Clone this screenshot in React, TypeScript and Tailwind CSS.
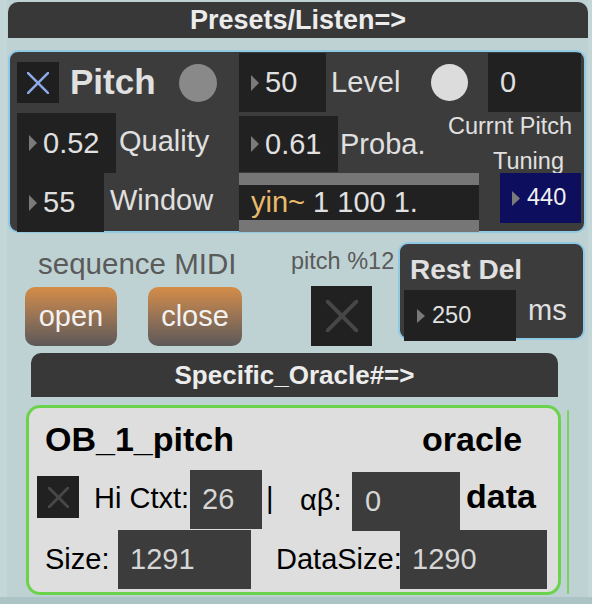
import React from "react";

const Tri = ({ h = 16 }: { h?: number }) => (
  <svg width={8} height={h} viewBox={`0 0 8 ${h}`} className="shrink-0">
    <polygon points={`0,0 8,${h / 2} 0,${h}`} fill="#7a7a7a" />
  </svg>
);

const XMark = ({
  size,
  color,
  stroke,
}: {
  size: number;
  color: string;
  stroke: number;
}) => (
  <svg width={size} height={size} viewBox={`0 0 ${size} ${size}`}>
    <line x1={0} y1={0} x2={size} y2={size} stroke={color} strokeWidth={stroke} />
    <line x1={size} y1={0} x2={0} y2={size} stroke={color} strokeWidth={stroke} />
  </svg>
);

export default function App() {
  return (
    <div className="relative h-[604px] w-[592px] overflow-hidden bg-[#bed2d4] font-['Liberation_Sans',Arial,sans-serif]">
      {/* canvas edges */}
      <div className="absolute left-0 top-0 h-[597px] w-[7px] bg-[#c3d6d8]" />
      <div className="absolute right-0 top-0 h-[597px] w-[4px] bg-[#c3d6d8]" />
      <div className="absolute bottom-0 left-0 h-[7px] w-full bg-[#adc4c7]" />
      <div className="absolute left-[567px] top-[410px] h-[184px] w-[2px] rounded-full bg-[#7fcf62]" />

      <div className="relative flex flex-col">
        {/* Presets header */}
        <div className="ml-[8px] mt-[2px] flex h-[36px] w-[580px] items-center justify-center rounded-t-[10px] bg-[#383838] text-[27px] font-bold leading-none text-[#ececec]">
          Presets/Listen=&gt;
        </div>

        {/* Pitch panel */}
        <div className="ml-[8px] mt-[12px] flex h-[183px] w-[578px] flex-col rounded-[10px] border-2 border-[#8fc9e6] bg-[#3c3c3c] pl-[7px] pt-[1px] text-[29px] leading-none text-[#e0e0e0]">
          {/* row 1 */}
          <div className="flex h-[60px] shrink-0 items-start">
            <div className="mt-[9px] flex h-[41px] w-[42px] items-center justify-center bg-[#1f1f1f]">
              <XMark size={22} color="#8eaaea" stroke={2.5} />
            </div>
            <span className="ml-[11px] mt-[11px] w-[109px] whitespace-nowrap text-[35px] font-bold">Pitch</span>
            <div className="mt-[11px] h-[38px] w-[38px] rounded-full bg-[#898989]" />
            <div className="ml-[22px] flex h-[59px] w-[87px] items-center gap-[6px] bg-[#212121] pl-[12px]">
              <Tri />
              <span>50</span>
            </div>
            <span className="ml-[5px] mt-[15px] w-[100px] whitespace-nowrap">Level</span>
            <div className="mt-[11px] h-[37px] w-[37px] rounded-full bg-[#dcdcdc]" />
            <div className="ml-[20px] flex h-[59px] w-[93px] items-center bg-[#212121] pl-[12px]">
              <span>0</span>
            </div>
          </div>

          {/* row 2 */}
          <div className="flex h-[60px] shrink-0 items-start">
            <div className="flex h-[60px] w-[99px] items-center gap-[6px] bg-[#212121] pl-[12px]">
              <Tri />
              <span>0.52</span>
            </div>
            <span className="ml-[3px] mt-[14px] w-[120px] whitespace-nowrap">Quality</span>
            <div className="mt-[3px] flex h-[56px] w-[99px] items-center gap-[6px] bg-[#212121] pl-[12px]">
              <Tri />
              <span>0.61</span>
            </div>
            <span className="ml-[2px] mt-[17px] w-[108px] whitespace-nowrap">Proba.</span>
            <div className="mt-[2px] flex flex-col text-[23.5px]">
              <span className="whitespace-nowrap">Currnt Pitch</span>
              <span className="ml-[45px] mt-[11.5px] whitespace-nowrap">Tuning</span>
            </div>
          </div>

          {/* row 3 */}
          <div className="flex h-[59px] shrink-0 items-start">
            <div className="flex h-[59px] w-[87px] items-center gap-[6px] bg-[#212121] pl-[12px]">
              <Tri />
              <span>55</span>
            </div>
            <span className="ml-[6px] mt-[13px] w-[129px] whitespace-nowrap">Window</span>
            <div className="flex h-[59px] w-[240px] flex-col justify-center bg-[#767676]">
              <div className="flex h-[35px] items-center whitespace-nowrap bg-[#212121] pl-[12px]">
                <span className="text-[#e9bb6a]">yin~</span>
                <span>&nbsp;1 100 1.</span>
              </div>
            </div>
            <div className="ml-[21px] flex h-[50px] w-[81px] items-center gap-[7px] bg-[#0e0e5e] pl-[12px] text-[23.5px] text-[#f0f0f0]">
              <Tri h={15} />
              <span>440</span>
            </div>
          </div>
        </div>

        {/* middle area */}
        <div className="flex h-[120px] items-start text-[29px] leading-none">
          <div className="ml-[25px] flex w-[217px] flex-col">
            <span className="ml-[13px] mt-[16px] whitespace-nowrap text-[29.5px] text-[#5a5a5a]">sequence MIDI</span>
            <div className="mt-[8.5px] flex gap-[31px]">
              <div className="flex h-[59px] w-[92px] items-center justify-center rounded-[10px] bg-linear-to-b from-[#d58d46] to-[#5c5858] text-[#f2f2f2]">
                open
              </div>
              <div className="flex h-[59px] w-[94px] items-center justify-center rounded-[10px] bg-linear-to-b from-[#d58d46] to-[#5c5858] text-[#f2f2f2]">
                close
              </div>
            </div>
          </div>

          <div className="ml-[49px] flex w-[104px] flex-col">
            <span className="mt-[17px] whitespace-nowrap text-[23.5px] text-[#5a5a5a]">pitch %12</span>
            <div className="ml-[20px] mt-[12.5px] flex h-[60px] w-[61px] items-center justify-center bg-[#212121]">
              <XMark size={32} color="#474747" stroke={4} />
            </div>
          </div>

          <div className="ml-[3px] mt-[9px] flex h-[98px] w-[187px] flex-col rounded-[10px] border-2 border-[#8fc9e6] bg-[#3c3c3c] text-[#e0e0e0]">
            <span className="ml-[10px] mt-[12px] whitespace-nowrap text-[28px] font-bold">Rest Del</span>
            <div className="ml-[4px] mt-[6px] flex items-start">
              <div className="flex h-[51px] w-[112px] items-center gap-[7px] bg-[#212121] pl-[13px] text-[23.5px]">
                <Tri h={14} />
                <span>250</span>
              </div>
              <span className="ml-[12px] mt-[5.5px] whitespace-nowrap">ms</span>
            </div>
          </div>
        </div>

        {/* Oracle header */}
        <div className="ml-[31px] flex h-[44px] w-[527px] items-center justify-center rounded-t-[10px] bg-[#383838] text-[26px] font-bold leading-none text-[#ececec]">
          Specific_Oracle#=&gt;
        </div>

        {/* Oracle panel */}
        <div className="ml-[26px] mt-[8px] flex h-[190px] w-[535px] flex-col rounded-[14px] border-[3px] border-[#6bd34b] bg-[#dedede] text-[29px] leading-none text-black">
          <div className="ml-[16px] mt-[14px] flex text-[34px] font-bold">
            <span className="w-[377px] whitespace-nowrap">OB_1_pitch</span>
            <span className="whitespace-nowrap">oracle</span>
          </div>

          <div className="mt-[14px] flex h-[60px] shrink-0 items-start">
            <div className="ml-[8px] mt-[6px] flex h-[42px] w-[42px] items-center justify-center bg-[#212121]">
              <XMark size={21} color="#474747" stroke={3} />
            </div>
            <span className="relative z-10 ml-[15px] mt-[14px] w-[96px] whitespace-nowrap">Hi Ctxt:</span>
            <div className="flex h-[59px] w-[72px] items-center bg-[#3c3c3c] pl-[12px] text-[#d6d6d6]">26</div>
            <span className="ml-[4px] mt-[14px] w-[34px]">|</span>
            <span className="mt-[16px] w-[52px] whitespace-nowrap">αβ:</span>
            <div className="mt-[2px] flex h-[59px] w-[108px] items-center bg-[#3c3c3c] pl-[13px] text-[#d6d6d6]">0</div>
            <span className="ml-[6px] mt-[9px] whitespace-nowrap text-[34px] font-bold">data</span>
          </div>

          <div className="flex items-start">
            <span className="ml-[16px] mt-[15px] w-[73px] whitespace-nowrap">Size:</span>
            <div className="flex h-[59px] w-[133px] items-center bg-[#3c3c3c] pl-[12px] text-[#d6d6d6]">1291</div>
            <span className="relative z-10 ml-[25px] mt-[15px] w-[124px] whitespace-nowrap">DataSize:</span>
            <div className="flex h-[59px] w-[147px] items-center bg-[#3c3c3c] pl-[12px] text-[#d6d6d6]">1290</div>
          </div>
        </div>
      </div>
    </div>
  );
}
